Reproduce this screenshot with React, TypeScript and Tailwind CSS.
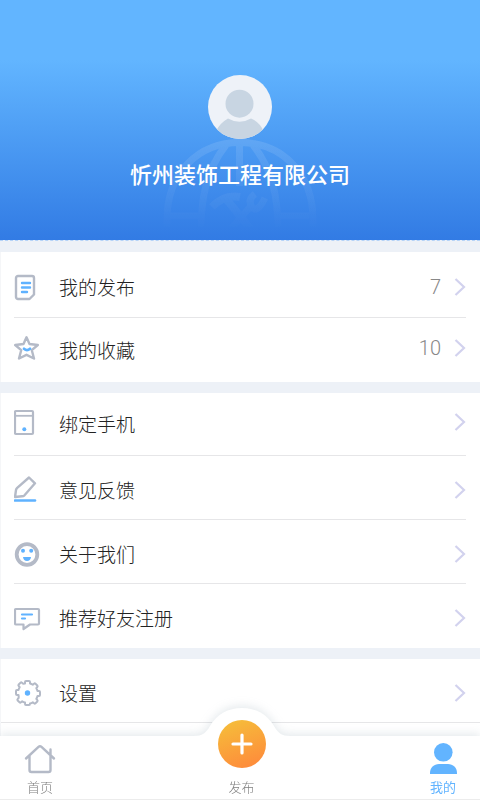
import { ReactNode } from 'react';
import clsx from 'clsx';

const DocIcon = () => (
  <svg viewBox="0 0 28 28" className="size-7 shrink-0" fill="none" strokeWidth="2.4">
    <path
      d="M4 3h14a2 2 0 0 1 2 2v16.500l-4.500 4.500H4a2 2 0 0 1-2-2V5a2 2 0 0 1 2-2z"
      stroke="#b4bac7"
      strokeLinejoin="round"
    />
    <path d="M8 10h8M8 14.500h8M8 19h5" stroke="#5fb2ff" strokeLinecap="round" />
  </svg>
);

const StarIcon = () => (
  <svg viewBox="0 0 28 28" className="size-7 shrink-0" fill="none">
    <path
      d="M12.500 3.300l3 6.700 8.300 1-6 5.200 2.200 8.300-7.500-3.700L5 24.500l2.200-8.300-6-5.200 8.300-1z"
      stroke="#b4bac7"
      strokeWidth="2.400"
      strokeLinejoin="round"
    />
    <path d="M10 14.800q3 2.600 6 0" stroke="#5fb2ff" strokeWidth="2.800" strokeLinecap="round" />
  </svg>
);

const PhoneIcon = () => (
  <svg viewBox="0 0 28 28" className="size-7 shrink-0" fill="none">
    <rect x="1" y="3" width="18" height="23" rx="1" stroke="#b4bac7" strokeWidth="2.200" />
    <path d="M1 7.800h18" stroke="#b4bac7" strokeWidth="1.800" />
    <circle cx="10.300" cy="21.300" r="2" fill="#5fb2ff" />
  </svg>
);

const PenIcon = () => (
  <svg viewBox="0 0 28 28" className="size-7 shrink-0" fill="none">
    <path
      d="M15 1.500l6 5.800-10.500 12q-1 .9-2.500 1L1 21l1-7q.2-1.300 1.200-2.200z"
      stroke="#b4bac7"
      strokeWidth="2.400"
      strokeLinejoin="round"
    />
    <path d="M1 24.500h20" stroke="#5fb2ff" strokeWidth="2.600" strokeLinecap="round" />
  </svg>
);

const SmileIcon = () => (
  <svg viewBox="0 0 28 28" className="size-7 shrink-0" fill="none">
    <circle cx="13" cy="14.500" r="10.300" stroke="#b4bac7" strokeWidth="3.800" />
    <circle cx="9" cy="10.800" r="2" fill="#5fb2ff" />
    <circle cx="17.200" cy="10.800" r="2" fill="#5fb2ff" />
    <path d="M9 17h8q-.5 4-4 4t-4-4z" fill="#5fb2ff" />
  </svg>
);

const ChatIcon = () => (
  <svg viewBox="0 0 28 28" className="size-7 shrink-0" fill="none" strokeWidth="2.200">
    <path
      d="M2 5h22a1 1 0 0 1 1 1v13.500a1 1 0 0 1-1 1h-8L9.500 25v-4.500H2a1 1 0 0 1-1-1V6a1 1 0 0 1 1-1z"
      stroke="#b4bac7"
      strokeLinejoin="round"
    />
    <path d="M8 10.500h10M8 14.500h3" stroke="#5fb2ff" strokeLinecap="round" />
  </svg>
);

const GearIcon = () => (
  <svg viewBox="0 0 28 28" className="size-7 shrink-0" fill="none">
    <path
      d="M12 2h3q1 0 1 1v1.500q1.500.4 2.800 1.200l1.200-1q.8-.6 1.500 0l1.800 1.800q.7.800 0 1.500l-1 1.200q.9 1.300 1.200 2.800H25q1 0 1 1v3q0 1-1 1h-1.500q-.3 1.500-1.200 2.800l1 1.200q.7.700 0 1.500l-1.800 1.800q-.7.600-1.500 0l-1.200-1q-1.300.8-2.800 1.200V25q0 1-1 1h-3q-1 0-1-1v-1.500q-1.500-.4-2.800-1.200l-1.200 1q-.8.600-1.500 0l-1.800-1.800q-.7-.8 0-1.500l1-1.200Q4.800 17.500 4.500 16H3q-1 0-1-1v-3q0-1 1-1h1.500q.3-1.500 1.200-2.800L4.700 7Q4 6.300 4.700 5.500l1.800-1.800q.7-.6 1.500 0l1.200 1Q10 4.600 11 4.500V3q0-1 1-1z"
      stroke="#b4bac7"
      strokeWidth="2"
      strokeLinejoin="round"
    />
    <circle cx="13.500" cy="14" r="2.700" fill="#5fb2ff" />
  </svg>
);

const Chevron = () => (
  <svg viewBox="0 0 12 18" className="h-[18px] w-3 shrink-0" fill="none">
    <path d="M1.500 1l8.500 8-8.500 8" stroke="#d2d2ee" strokeWidth="2.200" />
  </svg>
);

const GlobeMark = () => (
  <svg
    viewBox="0 0 154 96"
    className="absolute top-[138px] left-1/2 h-24 w-[154px] -translate-x-1/2"
    fill="none">
    <defs>
      <linearGradient id="globe-fade" gradientUnits="userSpaceOnUse" x1="0" y1="0" x2="0" y2="94">
        <stop offset="0" stopColor="#fff" stopOpacity="0.120" />
        <stop offset="1" stopColor="#fff" stopOpacity="0" />
      </linearGradient>
      <mask id="globe-shape">
        <g stroke="#fff">
          <path d="M4 93V82C4 34 36 4.500 77 4.500S150 34 150 82v11" strokeWidth="7" />
          <path d="M38 93c0-35 6-62 25-86M115 93c0-35-6-62-25-86M76.500 8v40" strokeWidth="7" />
          <path d="M7 78h28M118 78h28" strokeWidth="7" />
          <path d="M49 69q12-13 28-10M64 62l26 32" strokeWidth="8" />
          <path d="M92 56q-8 6-3 13t13-9M88 68L66 93" strokeWidth="7" />
        </g>
      </mask>
    </defs>
    <rect width="154" height="96" fill="url(#globe-fade)" mask="url(#globe-shape)" />
  </svg>
);

type RowProps = {
  icon: ReactNode;
  label: string;
  count?: number;
  // rows with the tighter top padding
  tight?: boolean;
  className?: string;
};

const Row = ({ icon, label, count, tight, className }: RowProps) => (
  <li className={clsx('border-b border-[#e6e6e8] last:border-b-0', className ?? 'h-16')}>
    <a href="#" className={clsx('flex h-full items-center', tight ? 'pb-1' : 'pt-1')}>
      {icon}
      <span
        className={clsx('ml-[17px] flex-1 text-[19px] leading-7 text-[#222]', tight && 'pt-1')}>
        {label}
      </span>
      {count !== undefined && (
        <span className="mr-[13px] font-[Roboto,sans-serif] text-[20px] leading-7 text-[#888]">
          {count}
        </span>
      )}
      <Chevron />
    </a>
  </li>
);

const TabBar = () => (
  <nav className="fixed inset-x-0 bottom-0 h-16">
    <div className="absolute inset-x-0 bottom-0 flex h-[92px] items-end drop-shadow-[0_-2px_5px_rgba(120,145,160,0.2)]">
      <div className="h-16 flex-1 bg-white" />
      <svg viewBox="0 0 100 92" className="h-[92px] w-[100px] shrink-0" fill="#fff">
        <path d="M0 28h4c8 0 12-3 16-10C27 6 38 0 52 0s25 6 32 18c4 7 8 10 16 10v64H0z" />
      </svg>
      <div className="h-16 flex-1 bg-white" />
    </div>
    <div className="relative flex h-full items-end justify-between border-b border-[#ececec] pr-[21px] pb-[3px] pl-6 text-[13px] leading-[18px] text-[#808080]">
      <button className="flex w-8 flex-col items-center gap-1">
        <svg viewBox="0 0 32 32" className="size-8" fill="none" stroke="#b4bac7" strokeWidth="2.400">
          <path
            d="M2 16.500L14.500 4.800q1.500-1.300 3 0L30 16.500M5.500 13.500V28q0 2 2 2h17q2 0 2-2V7.500"
            strokeLinecap="round"
            strokeLinejoin="round"
          />
        </svg>
        首页
      </button>
      <button className="flex w-12 flex-col items-center gap-[10px]">
        <span className="flex size-12 items-center justify-center rounded-full bg-linear-[160deg] from-[#f5c13a] to-[#ff863b]">
          <svg viewBox="0 0 22 22" className="size-[22px]">
            <path d="M11 2v18M2 11h18" stroke="#fff" strokeWidth="3.200" strokeLinecap="round" />
          </svg>
        </span>
        发布
      </button>
      <button className="flex w-8 flex-col items-center gap-1 font-normal text-[#62b4ff]">
        <svg viewBox="0 0 32 32" className="size-8" fill="currentColor">
          <circle cx="16.300" cy="10.300" r="9.300" />
          <path d="M3 32v-1c0-5.500 4-9 9-9h9c5 0 9 3.500 9 9v1z" />
        </svg>
        我的
      </button>
    </div>
  </nav>
);

export default function App() {
  return (
    <div className="flex min-h-screen flex-col gap-[11px] bg-[#edf1f7] font-['Noto_Sans_CJK_SC',sans-serif] font-light">
      <header className="relative flex flex-col items-center border-b border-dashed border-[#b5d3f8] bg-linear-to-b from-[#62b5ff] from-25% to-[#327be4] bg-clip-padding pt-[75px] pb-[51px]">
        <GlobeMark />
        <svg viewBox="0 0 64 64" className="relative size-16 rounded-full">
          <rect width="64" height="64" fill="#eef2f8" />
          <path d="M8 56q4-8 12-12.500 11.500 6.500 23 0Q52 47 56 57L44 64H20z" fill="#c8d5e2" />
          <circle cx="31.500" cy="28.700" r="14" fill="#c8d5e2" />
        </svg>
        <h1 className="relative mt-[18px] text-[22px] leading-8 font-medium text-white">
          忻州装饰工程有限公司
        </h1>
      </header>

      <ul className="border-l border-[#f5f6f8] bg-white pr-3.5 pl-[13px]">
        <Row icon={<DocIcon />} label="我的发布" count={7} className="h-[66px]" />
        <Row icon={<StarIcon />} label="我的收藏" count={10} tight />
      </ul>

      <ul className="border-l border-[#f5f6f8] bg-white pr-3.5 pl-[13px]">
        <Row icon={<PhoneIcon />} label="绑定手机" tight className="h-[63px]" />
        <Row icon={<PenIcon />} label="意见反馈" />
        <Row icon={<SmileIcon />} label="关于我们" />
        <Row icon={<ChatIcon />} label="推荐好友注册" />
      </ul>

      <div className="flex-1 border-l border-[#f5f6f8] bg-white pb-16">
        <ul className="border-b border-[#e6e6e8] pr-3.5 pl-[13px]">
          <Row icon={<GearIcon />} label="设置" className="h-[63px]" />
        </ul>
      </div>

      <TabBar />
    </div>
  );
}
